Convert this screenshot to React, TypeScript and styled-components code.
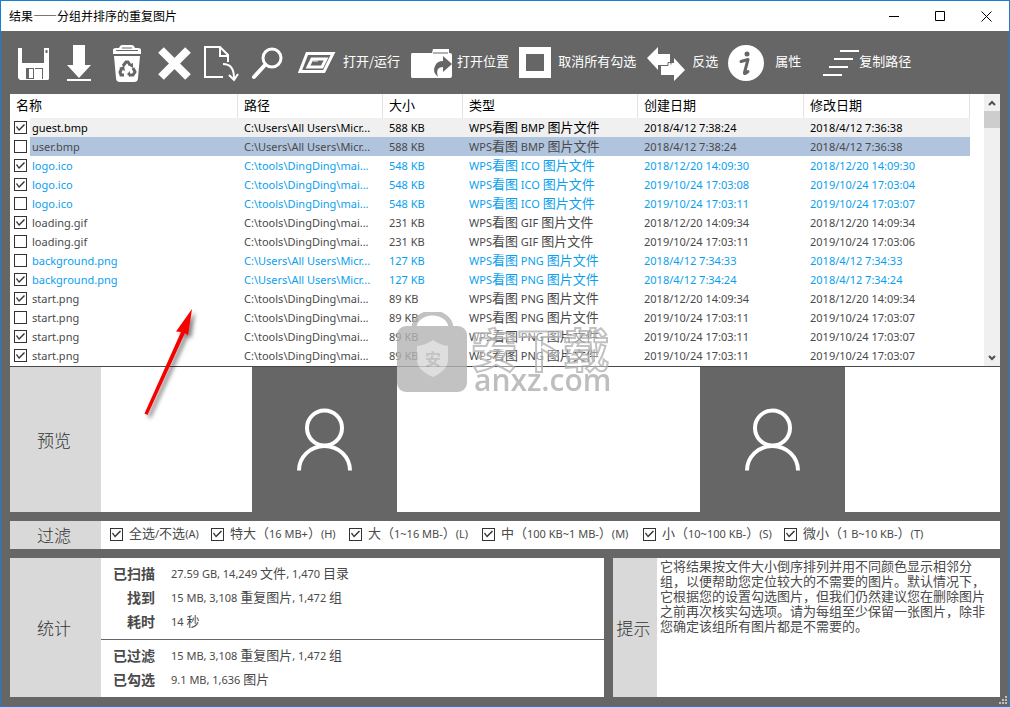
import React from "react";
import styled, { createGlobalStyle, css } from "styled-components";

const gray = "#666666";
const ink = "#4a4a4a";
const azure = "#0a9fee";

const GlobalStyle = createGlobalStyle`
  * { box-sizing: border-box; }
  body { margin: 0; }
  body, button, input, table {
    font-family: "Noto Sans", "Noto Sans CJK SC", sans-serif;
    font-size: 11px;
    color: ${ink};
  }
`;

const Window = styled.div`
  position: relative;
  display: flex;
  flex-direction: column;
  min-height: 100vh;
  background: ${gray};
  border: 1px solid #1a7fd4;
`;

const TitleBar = styled.header`
  display: flex;
  align-items: center;
  justify-content: space-between;
  height: 30px;
  padding-left: 8px;
  background: #fff;
`;

const Title = styled.h1`
  margin: 0;
  font: 12px/16px "Noto Sans CJK SC", sans-serif;
  color: #000;
`;

const WindowButtons = styled.div`
  display: flex;
`;

const WindowButton = styled.button`
  display: grid;
  place-items: center;
  width: 46px;
  height: 29px;
  padding: 0;
  border: 0;
  background: transparent;
`;

const Toolbar = styled.nav`
  display: flex;
  align-items: center;
  height: 63px;
  padding-left: 9px;
`;

const ToolButton = styled.button<{ $gap?: number }>`
  display: flex;
  align-items: center;
  flex: none;
  gap: ${(p) => p.$gap ?? 0}px;
  min-width: 47px;
  height: 44px;
  margin-right: ${(p) => (p.$gap === undefined ? 0 : 10)}px;
  padding: 0;
  border: 0;
  background: transparent;
  svg { flex: none; display: block; }
`;

const ToolLabel = styled.span`
  padding-bottom: 3px;
  color: #fff;
  font: 13px/18px "Noto Sans CJK SC", sans-serif;
  white-space: nowrap;
`;

const Content = styled.main`
  display: flex;
  flex: 1;
  flex-direction: column;
  gap: 9px;
  padding: 0 9px 9px;
`;

const ListPanel = styled.section`
  background: #fff;
`;

const ListArea = styled.div`
  display: flex;
  height: 273px;
  border-bottom: 1px solid ${ink};
`;

const FileTable = styled.table`
  flex: 1;
  min-width: 0;
  align-self: flex-start;
  table-layout: fixed;
  border-collapse: separate;
  border-spacing: 0;
`;

const HeadCell = styled.th`
  height: 24px;
  padding: 0 6px 2px;
  border-right: 1px solid #e3e3e3;
  text-align: left;
  color: #000;
  font: 13px/20px "Noto Sans CJK SC", sans-serif;
  &:last-child { border: 0; padding: 0; }
`;

type Tone = "current" | "selected" | "azure" | "plain";

const toneStyles = {
  current: css`color: #000; --row: #f0f0f0;`,
  selected: css`color: ${ink}; --row: #b0c4de;`,
  azure: css`color: ${azure}; --row: #fff;`,
  plain: css`color: ${ink}; --row: #fff;`,
};

const Row = styled.tr<{ $tone: Tone }>`
  ${(p) => toneStyles[p.$tone]}
`;

const Cell = styled.td`
  height: 19px;
  padding: 0 6px;
  background: var(--row);
  line-height: 18px;
  white-space: nowrap;
  overflow: hidden;
`;

const NameCell = styled(Cell)`
  padding: 0 2px;
`;

const PlainCell = styled.td`
  height: 19px;
  padding: 0 0 0 4px;
  line-height: 0;
`;

const Tick = styled.input.attrs({ type: "checkbox" })`
  appearance: none;
  flex: none;
  width: 13px;
  height: 13px;
  margin: 0;
  border: 1px solid #333;
  background: #fff;
  &:checked::before {
    content: "";
    display: block;
    width: 11px;
    height: 11px;
    background: #333;
    clip-path: polygon(1px 5px, 2px 4px, 4px 7px, 9px 2px, 10px 3px, 4px 9px);
  }
`;

const Han = styled.span`
  font-size: 13px;
  line-height: 1px;
`;

const ScrollBar = styled.div`
  display: flex;
  flex-direction: column;
  width: 16px;
  background: #f0f0f0;
`;

const ScrollArrow = styled.button`
  display: grid;
  place-items: center;
  height: 17px;
  padding: 0;
  border: 0;
  background: transparent;
`;

const ScrollThumb = styled.div`
  height: 17px;
  margin-bottom: auto;
  background: #cdcdcd;
`;

const Labelled = styled.div`
  display: flex;
  flex: 1;
  min-width: 0;
  background: #fff;
`;

const SideLabel = styled.h2<{ $narrow?: boolean }>`
  display: grid;
  place-items: center;
  flex: none;
  width: ${(p) => (p.$narrow ? 44 : 91)}px;
  margin: 0;
  padding-right: 3px;
  background: #d9d9d9;
  font: 17px/24px "Noto Sans CJK SC", sans-serif;
  font-weight: 300;
  color: #333;
`;

const Previews = styled.div`
  display: grid;
  grid-template-columns: 1fr 1fr;
  flex: 1;
  justify-items: center;
  padding-right: 4px;
`;

const Thumb = styled.div`
  display: grid;
  place-items: center;
  width: 145px;
  height: 145px;
  background: ${gray};
`;

const FilterPanel = styled.section`
  display: flex;
  height: 28px;
`;

const Filters = styled.div`
  display: grid;
  grid-template-columns: 101px 138px 133px 161px 141px auto;
  align-items: center;
  padding: 0 0 2px 9px;
`;

const FilterItem = styled.label`
  display: flex;
  align-items: center;
  gap: 6px;
  white-space: nowrap;
  line-height: 18px;
`;

const Bottom = styled.div`
  display: grid;
  grid-template-columns: 594fr 387fr;
  gap: 9px;
  flex: 1;
`;

const Stats = styled.div`
  flex: 1;
`;

const StatGroup = styled.dl`
  display: grid;
  grid-template-columns: 54px 1fr;
  grid-auto-rows: 24px;
  column-gap: 16px;
  align-items: center;
  margin: 0;
  padding: 3px 0 6px;
  & + & { border-top: 1px solid ${gray}; }
`;

const StatName = styled.dt`
  text-align: right;
  font: bold 14px/20px "Noto Sans CJK SC", sans-serif;
`;

const StatValue = styled.dd`
  margin: 0;
`;

const Hint = styled.p`
  flex: 1;
  margin: 0;
  padding: 0 14px 0 3px;
  font: 13px/15px "Noto Sans CJK SC", sans-serif;
`;

const Overlay = styled.div<{ $x: number; $y: number }>`
  position: absolute;
  left: ${(p) => p.$x}px;
  top: ${(p) => p.$y}px;
  pointer-events: none;
  svg { display: block; }
`;

const Watermark = styled(Overlay)`
  display: flex;
  gap: 4px;
  opacity: 0.8;
`;

const MarkText = styled.div`
  color: #afafaf;
`;

const MarkHan = styled.div`
  margin-top: 12px;
  font: bold 46px/46px "Noto Sans CJK SC", sans-serif;
  color: rgba(255, 255, 255, 0.5);
  -webkit-text-stroke: 2px #b4b4b4;
`;

const MarkSite = styled.div`
  padding-left: 3px;
  font: 600 30px/20px "Open Sans", sans-serif;
`;

const Grip = styled.div`
  position: absolute;
  right: 2px;
  bottom: 2px;
  svg { display: block; }
`;

/* Chinese runs are set two pixels larger than the Latin text around them. */
function Mixed({ text }: { text: string }) {
  return (
    <>
      {text.split(/([\u3000-\u9fff\uff00-\uffef]+)/).map((part, i) =>
        i % 2 ? <Han key={i}>{part}</Han> : part
      )}
    </>
  );
}

type FileRow = [boolean, Tone, string, string, string, string, string, string];
const users = "C:\\Users\\All Users\\Micr...";
const tools = "C:\\tools\\DingDing\\mai...";
const rows: FileRow[] = [
  [true, "current", "guest.bmp", users, "588", "BMP", "2018/4/12 7:38:24", "2018/4/12 7:36:38"],
  [false, "selected", "user.bmp", users, "588", "BMP", "2018/4/12 7:38:24", "2018/4/12 7:36:38"],
  [true, "azure", "logo.ico", tools, "548", "ICO", "2018/12/20 14:09:30", "2018/12/20 14:09:30"],
  [true, "azure", "logo.ico", tools, "548", "ICO", "2019/10/24 17:03:08", "2019/10/24 17:03:04"],
  [false, "azure", "logo.ico", tools, "548", "ICO", "2019/10/24 17:03:11", "2019/10/24 17:03:07"],
  [true, "plain", "loading.gif", tools, "231", "GIF", "2018/12/20 14:09:34", "2018/12/20 14:09:34"],
  [false, "plain", "loading.gif", tools, "231", "GIF", "2019/10/24 17:03:11", "2019/10/24 17:03:06"],
  [false, "azure", "background.png", users, "127", "PNG", "2018/4/12 7:34:33", "2018/4/12 7:34:33"],
  [true, "azure", "background.png", users, "127", "PNG", "2018/4/12 7:34:24", "2018/4/12 7:34:24"],
  [true, "plain", "start.png", tools, "89", "PNG", "2018/12/20 14:09:34", "2018/12/20 14:09:34"],
  [false, "plain", "start.png", tools, "89", "PNG", "2019/10/24 17:03:11", "2019/10/24 17:03:07"],
  [true, "plain", "start.png", tools, "89", "PNG", "2019/10/24 17:03:11", "2019/10/24 17:03:07"],
  [true, "plain", "start.png", tools, "89", "PNG", "2019/10/24 17:03:11", "2019/10/24 17:03:07"],
];

const filters = [
  "全选/不选(A)",
  "特大（16 MB+）(H)",
  "大（1~16 MB-）(L)",
  "中（100 KB~1 MB-）(M)",
  "小（10~100 KB-）(S)",
  "微小（1 B~10 KB-）(T)",
];

const SaveIcon = () => (
  <svg width="47" height="44" fill="#fff">
    <path d="M8 7h4v15h22V7h5v31l-1 1H10l-2-2z" />
    <path d="M35.500 9h2v3h-2z" fill={gray} />
    <path d="M16 27h8v11h-8z" fill={gray} />
    <path d="M19 28h4v9h-4z" />
    <path d="M25 27h7v1h-7zM32 27h1v11h-1z" fill={gray} />
  </svg>
);
const DownloadIcon = () => (
  <svg width="47" height="44" fill="#fff">
    <path d="M16 4h12v20h6L22 37 10 24h6zM10 38h24v2H10z" />
  </svg>
);
const TrashIcon = () => (
  <svg width="47" height="44">
    <path d="M9 13V9q0-2 3-2h3q1-3 3-3h10q2 0 3 3h3q3 0 3 2v4z" fill="#fff" />
    <path d="M18 7h10M12 9.500h22" stroke={gray} />
    <path d="M10 15h26l-2 22q0 4-4 4H16q-4 0-4-4z" fill="#fff" />
    <g fill="none" stroke={gray} strokeWidth="3">
      <path d="M19 25l3-4h2l2 3M29 27l2 4-2 3h-4M20 34h-3l-1-3 2-4" />
    </g>
    <path d="M24 24l5-2 0 5zM26 30v6l-3-3zM15 27l5-2 1 5z" fill={gray} />
  </svg>
);
const DeleteIcon = () => (
  <svg width="47" height="44">
    <path d="M10 9l27 27M37 9L10 36" stroke="#fff" strokeWidth="8" />
  </svg>
);
const ExportIcon = () => (
  <svg width="47" height="44" fill="none" stroke="#fff" strokeWidth="2">
    <path d="M25 36H7V6h15l8 8v7M22 6v9h8M25 23q11 0 11 14M31 34l5 5 4-6" />
  </svg>
);
const SearchIcon = () => (
  <svg width="47" height="44" fill="none" stroke="#fff">
    <circle cx="27" cy="17" r="9" strokeWidth="3" />
    <path d="M20 24L9 36" strokeWidth="4" strokeLinecap="round" />
  </svg>
);
const RunIcon = () => (
  <svg width="47" height="44" fill="none" stroke="#fff">
    <path d="M15 12.500h26l-9 18H8z" strokeWidth="3" />
    <path d="M20 18h14l-4 8H16z" strokeWidth="3" />
    <path d="M21 20h5" strokeWidth="1" />
  </svg>
);
const FolderIcon = () => (
  <svg width="44" height="44">
    <path d="M2 12h20l1-4h16v4h1q2 0 2 2v21q0 2-2 2H2q-1 0-1-2V14q0-2 1-2z" fill="#fff" />
    <path d="M23 12h15" stroke={gray} />
    <path d="M28 36q-6-5-3-11 2-5 8-5v-5l9 8-9 8v-5q-8 0-5 10z" fill={gray} />
  </svg>
);
const SquareIcon = () => (
  <svg width="32" height="44">
    <path d="M3.500 9.500h25v24h-25z" fill="none" stroke="#fff" strokeWidth="7" />
  </svg>
);
const SwapIcon = () => (
  <svg width="40" height="44">
    <path d="M1 17L12 6v7h12v9h4v-5l11 12-11 11v-6H15V24h-3v5z" fill="#fff" />
    <path d="M13 24.500h9v-3h3v2" fill="none" stroke={gray} />
  </svg>
);
const InfoIcon = () => (
  <svg width="36" height="44">
    <circle cx="18" cy="22" r="18" fill="#fff" />
    <circle cx="19" cy="13" r="2.500" fill={gray} />
    <path d="M13 20.500l7-2-3.500 13q-.5 2.500 3.500-1" fill="none" stroke={gray} strokeWidth="3" strokeLinejoin="round" strokeLinecap="round" />
  </svg>
);
const LinesIcon = () => (
  <svg width="48" height="44" stroke="#fff" strokeWidth="2">
    <path d="M29 10h19M23 18h19M18 26h19M12 34h19" />
  </svg>
);

const PersonIcon = () => (
  <svg width="65" height="75" fill="none" stroke="#fff" strokeWidth="4">
    <circle cx="32.500" cy="26" r="17.500" />
    <path d="M7 68.500a25.500 24.500 0 0 1 51 0" />
  </svg>
);

const iconTools = [
  ["保存", SaveIcon],
  ["导出", DownloadIcon],
  ["回收站", TrashIcon],
  ["删除", DeleteIcon],
  ["移动", ExportIcon],
  ["搜索", SearchIcon],
] as const;

const labelTools = [
  ["打开/运行", RunIcon, 4],
  ["打开位置", FolderIcon, 3],
  ["取消所有勾选", SquareIcon, 7],
  ["反选", SwapIcon, 6],
  ["属性", InfoIcon, 11],
  ["复制路径", LinesIcon, 0],
] as const;

const scanned = [
  ["已扫描", "27.59 GB, 14,249 文件, 1,470 目录"],
  ["找到", "15 MB, 3,108 重复图片, 1,472 组"],
  ["耗时", "14 秒"],
];
const filtered = [
  ["已过滤", "15 MB, 3,108 重复图片, 1,472 组"],
  ["已勾选", "9.1 MB, 1,636 图片"],
];

function StatList({ items }: { items: string[][] }) {
  return (
    <StatGroup>
      {items.map(([name, value]) => (
        <React.Fragment key={name}>
          <StatName>{name}</StatName>
          <StatValue><Mixed text={value} /></StatValue>
        </React.Fragment>
      ))}
    </StatGroup>
  );
}

export default function App() {
  return (
    <>
      <GlobalStyle />
      <Window lang="zh-CN">
        <TitleBar>
          <Title>结果——分组并排序的重复图片</Title>
          <WindowButtons>
            <WindowButton aria-label="最小化">
              <svg width="11" height="11"><path d="M0 5.500h10" stroke="#000" /></svg>
            </WindowButton>
            <WindowButton aria-label="最大化">
              <svg width="11" height="11"><path d="M.5.5h9v9h-9z" fill="none" stroke="#000" /></svg>
            </WindowButton>
            <WindowButton aria-label="关闭">
              <svg width="11" height="11"><path d="M.5.5l10 10M10.500.5l-10 10" stroke="#000" /></svg>
            </WindowButton>
          </WindowButtons>
        </TitleBar>

        <Toolbar>
          {iconTools.map(([name, Icon]) => (
            <ToolButton key={name} aria-label={name}><Icon /></ToolButton>
          ))}
          {labelTools.map(([name, Icon, gap]) => (
            <ToolButton key={name} $gap={gap}><Icon /><ToolLabel>{name}</ToolLabel></ToolButton>
          ))}
        </Toolbar>

        <Content>
          <ListPanel>
            <ListArea>
              <FileTable>
                <colgroup>
                  <col width="20" /><col width="208" /><col width="145" /><col width="80" />
                  <col width="175" /><col width="166" /><col width="166" /><col />
                </colgroup>
                <thead>
                  <tr>
                    <HeadCell colSpan={2}>名称</HeadCell>
                    <HeadCell>路径</HeadCell>
                    <HeadCell>大小</HeadCell>
                    <HeadCell>类型</HeadCell>
                    <HeadCell>创建日期</HeadCell>
                    <HeadCell>修改日期</HeadCell>
                    <HeadCell as="td" />
                  </tr>
                </thead>
                <tbody>
                  {rows.map(([on, tone, name, path, size, kind, created, modified], i) => (
                    <Row key={i} $tone={tone}>
                      <PlainCell><Tick defaultChecked={on} aria-label={name} /></PlainCell>
                      <NameCell>{name}</NameCell>
                      <Cell>{path}</Cell>
                      <Cell>{size} KB</Cell>
                      <Cell><Mixed text={`WPS看图 ${kind} 图片文件`} /></Cell>
                      <Cell>{created}</Cell>
                      <Cell>{modified}</Cell>
                      <PlainCell />
                    </Row>
                  ))}
                </tbody>
              </FileTable>
              <ScrollBar>
                <ScrollArrow aria-label="向上滚动">
                  <svg width="8" height="6"><path d="M1 5l3-3 3 3" fill="none" stroke="#505050" strokeWidth="2" /></svg>
                </ScrollArrow>
                <ScrollThumb />
                <ScrollArrow aria-label="向下滚动">
                  <svg width="8" height="6"><path d="M1 1l3 3 3-3" fill="none" stroke="#505050" strokeWidth="2" /></svg>
                </ScrollArrow>
              </ScrollBar>
            </ListArea>
            <Labelled>
              <SideLabel>预览</SideLabel>
              <Previews>
                <Thumb><PersonIcon /></Thumb>
                <Thumb><PersonIcon /></Thumb>
              </Previews>
            </Labelled>
          </ListPanel>

          <FilterPanel>
            <Labelled>
              <SideLabel>过滤</SideLabel>
              <Filters>
                {filters.map((text) => (
                  <FilterItem key={text}>
                    <Tick defaultChecked />
                    <span><Mixed text={text} /></span>
                  </FilterItem>
                ))}
              </Filters>
            </Labelled>
          </FilterPanel>

          <Bottom>
            <Labelled>
              <SideLabel>统计</SideLabel>
              <Stats>
                <StatList items={scanned} />
                <StatList items={filtered} />
              </Stats>
            </Labelled>
            <Labelled>
              <SideLabel $narrow>提示</SideLabel>
              <Hint>
                它将结果按文件大小倒序排列并用不同颜色显示相邻分组，以便帮助您定位较大的不需要的图片。默认情况下，它根据您的设置勾选图片，但我们仍然建议您在删除图片之前再次核实勾选项。请为每组至少保留一张图片，除非您确定该组所有图片都是不需要的。
              </Hint>
            </Labelled>
          </Bottom>
        </Content>

        <Overlay $x={139} $y={304}>
          <svg width="64" height="120">
            <defs>
              <filter id="soft" x="-20%" y="-20%" width="150%" height="150%">
                <feDropShadow dx="3" dy="3" stdDeviation="2" floodColor="#000" floodOpacity="0.5" />
              </filter>
            </defs>
            <path d="M52 4L36 26.500l5 .5L4.500 108.500l3 1.500L45 28l3 2.500z" fill="#f60000" filter="url(#soft)" />
          </svg>
        </Overlay>

        <Watermark $x={396} $y={311}>
          <svg width="70" height="81">
            <path d="M17 16a18.500 15 0 0 1 37 0" fill="none" stroke="#b4b4b4" strokeWidth="5" />
            <rect y="14" width="70" height="66" rx="9" fill="#b4b4b4" />
            <path d="M20 34q9-1 16-6 7 5 15 6v14q0 10-15 17-16-7-16-17z" fill="#d6d6d6" />
            <text x="36" y="53" textAnchor="middle" fontSize="16" fontWeight="bold" fontFamily="Noto Sans CJK SC, sans-serif" fill="#b4b4b4">安</text>
          </svg>
          <MarkText>
            <MarkHan>安下载</MarkHan>
            <MarkSite>anxz.com</MarkSite>
          </MarkText>
        </Watermark>

        <Grip>
          <svg width="8" height="8" fill="#c0c0c0">
            <path d="M6 0h2v2H6zM3 3h2v2H3zM6 3h2v2H6zM0 6h2v2H0zM3 6h2v2H3zM6 6h2v2H6z" />
          </svg>
        </Grip>
      </Window>
    </>
  );
}
